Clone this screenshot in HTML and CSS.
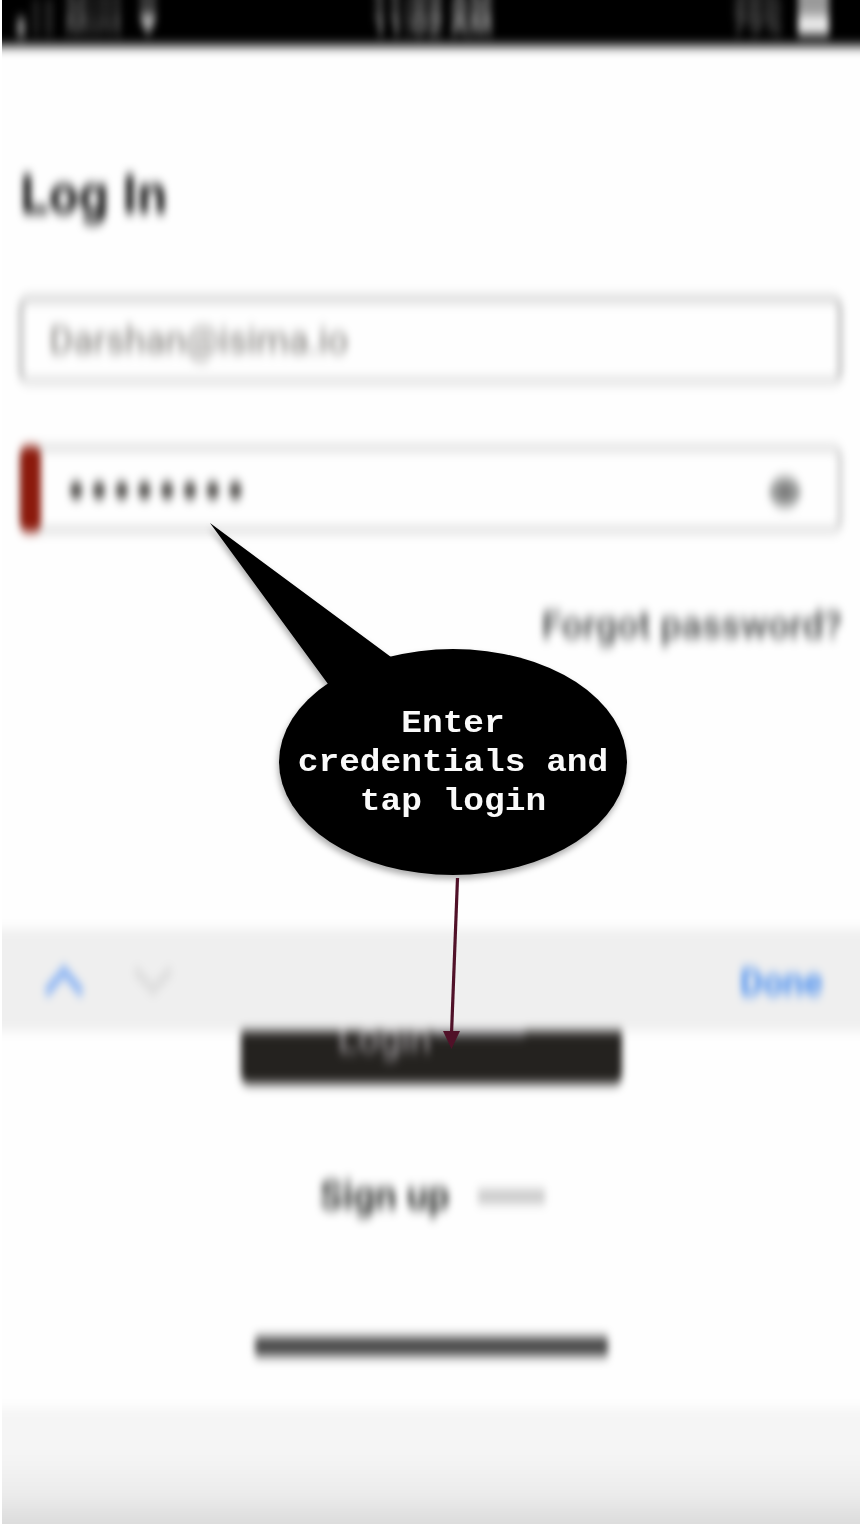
FILE: index.html
```html
<!DOCTYPE html>
<html lang="en">
<head>
<meta charset="utf-8">
<title>Log In</title>
<link rel="stylesheet" href="styles.css">
</head>
<body>
<svg class="defs" aria-hidden="true">
  <filter id="soften" x="0" y="0" width="1" height="1" color-interpolation-filters="sRGB">
    <feGaussianBlur stdDeviation="3.7 6"/>
  </filter>
</svg>
<main class="page">
  <div class="frame">
    <div class="screen">
      <header class="status">
        <div class="status-left">
          <svg class="signal" viewBox="0 0 44 40"><rect x="1" y="19" width="8" height="19" fill="#858585"/><rect x="16" y="0" width="8" height="37" fill="#1c1c1c"/><rect x="29" y="0" width="8" height="37" fill="#222"/></svg>
          <span class="status-text carrier">Mint</span>
          <svg class="wifi" viewBox="0 0 28 60"><path d="M4 0h20v40l-10 14L4 40z" fill="#383838"/><path d="M4 34q10-8 20 0L14 55z" fill="#b5b5b5"/></svg>
        </div>
        <span class="status-text time">11:02 AM</span>
        <div class="status-right">
          <span class="status-text percent">79%</span>
          <span class="battery"></span>
        </div>
      </header>
      <section class="form">
        <h1 class="title">Log In</h1>
        <div class="field email">Darshan@isima.io</div>
        <div class="field password">
          <span class="marker"></span>
          <span class="dots">••••••••</span>
          <svg class="eye" viewBox="0 0 40 40"><path d="M2 20Q6 3 20 3T38 20Q34 37 20 37T2 20Z" fill="#9c9e9d"/><circle cx="20" cy="20" r="8" fill="#777"/></svg>
        </div>
        <div class="forgot">Forgot password?</div>
      </section>
      <nav class="toolbar">
        <svg class="chevron up" viewBox="0 0 44 32"><path d="M4 28L22 6l18 22"/></svg>
        <svg class="chevron down" viewBox="0 0 44 32"><path d="M4 5l18 20L40 5"/></svg>
        <span class="done">Done</span>
      </nav>
      <section class="actions">
        <div class="login"><span class="login-text">Login</span><span class="login-line"></span></div>
        <div class="signup"><span>Sign up</span><span class="dash"></span></div>
        <div class="home"></div>
      </section>
      <footer class="bottom"></footer>
    </div>
  </div>
  <div class="callout">
    <svg class="shape" viewBox="0 0 862 1524">
      <g class="bubble"><path d="M210 523L391 657L400 720L350 720L328 684Z"/><ellipse cx="453" cy="762" rx="174" ry="113"/></g>
      <path class="line" d="M457.500 878L451.500 1034"/><path class="head" d="M443 1031h17l-8.500 18z"/>
    </svg>
    <p class="hint">Enter<br>credentials and<br>tap login</p>
  </div>
</main>
</body>
</html>
```
FILE: styles.css
```css
* { box-sizing: border-box; }
body { margin: 0; background: #fff; font-family: Roboto, "Liberation Sans", sans-serif; }
.defs { position: absolute; width: 0; height: 0; }
.page { position: relative; width: 862px; height: 1524px; overflow: hidden; }
.frame { margin: 0 2px; height: 1524px; overflow: hidden; }

/* The screen bleeds 20px past the frame so the blur stays solid at its edges. */
.screen { margin: -20px; height: 1564px; display: flex; flex-direction: column; background: #fefefe; filter: url(#soften); }

.status { flex: none; height: 66px; padding: 0 20px; background: #000; display: grid; grid-template-columns: 370px 1fr 130px; align-items: end; }
.status-left { display: flex; align-items: flex-end; padding: 0 0 8px 14px; }
.signal { width: 44px; height: 40px; }
.wifi { width: 28px; height: 50px; margin-left: 11px; }
/* Upward shadows draw the vertical streaks above each label. */
.status-text { display: inline-block; font-size: 27px; line-height: 28px; white-space: nowrap; text-shadow: 0 -8px 0 #3c3c3c, 0 -16px 0 #3c3c3c, 0 -22px 0 #3c3c3c, 0 -30px 0 #3c3c3c; }
.carrier { margin: 0 0 -1px 5px; color: #6c6c6c; letter-spacing: 1px; }
.time { justify-self: start; margin-bottom: 7px; color: #969696; letter-spacing: .6px; font-weight: 500; text-shadow: 0 -8px 0 #555, 0 -16px 0 #555, 0 -22px 0 #555, 0 -30px 0 #555; }
.status-right { display: flex; align-items: flex-end; padding-bottom: 7px; }
.percent { color: #606060; width: 66px; padding-left: 2px; }
.battery { width: 31px; height: 55px; margin: 0 0 5px 2px; background: linear-gradient(#9a9a9a 34px, #eee 38px); }

.form { flex: none; height: 883px; padding: 0 38px 0 37px; }
.title { margin: 119px 0 0 1px; font-size: 53px; line-height: 60px; font-weight: 700; color: #1b1b1b; }
.field { border: 4px solid #b0b0b0; border-radius: 10px; height: 86px; display: flex; align-items: center; }
.email { margin-top: 72px; padding-left: 26px; font-size: 37px; color: #7a7773; border-bottom-color: #c4c4c4; }
.password { margin-top: 63px; border-color: #c4c4c4; }
.marker { width: 21px; height: 86px; margin-left: -3px; border-radius: 8px; background: #8b1a0c; }
.dots { margin-left: 27px; font-family: "Liberation Sans", sans-serif; font-size: 47px; line-height: 60px; letter-spacing: 6.3px; color: #4c4a47; transform: scaleY(1.35); }
.eye { width: 38px; height: 36px; margin: 6px 34px 0 auto; }
.forgot { margin-top: 71px; text-align: right; font-size: 37.6px; line-height: 44px; font-weight: 500; color: #484a4a; }

.toolbar { flex: none; height: 102px; padding: 0 57px 0 60px; background: #efefef; display: flex; align-items: center; }
.chevron { width: 44px; height: 32px; margin-top: 2px; fill: none; stroke-width: 6.5; }
.up { stroke: #75a7f5; }
.down { stroke: #d8d8d8; margin-left: 45px; }
.done { margin-left: auto; margin-top: 6px; font-size: 36px; line-height: 42px; font-weight: 600; color: #3f88ef; }

.actions { flex: none; height: 377px; display: flex; flex-direction: column; align-items: center; }
.login { width: 381px; height: 53px; border-radius: 0 0 8px 8px; background: #24221f; overflow: hidden; display: flex; align-items: flex-start; padding-left: 97px; color: #aaa6aa; }
.login-text { font-size: 38px; line-height: 42px; margin-top: -13px; width: 95px; }
.login-line { width: 92px; height: 5px; background: #77757a; }
.signup { display: flex; align-items: center; gap: 28px; margin: 90px 0 0 2px; font-size: 38.5px; line-height: 44px; font-weight: 700; color: #383a38; }
.dash { width: 67px; height: 13px; background: #c4c4c4; }
.home { width: 353px; height: 19px; margin-top: 119px; border-radius: 3px; background: #464646; }
.bottom { flex: 1; background: linear-gradient(#f5f5f5 0, #f5f5f5 46px, #ebebeb 88px, #dcdcdc 114px); }

/* Annotation drawn over the login screen. */
.callout { position: absolute; inset: 0; }
.shape { display: block; width: 862px; height: 1524px; }
.bubble { filter: drop-shadow(-1px 4px 3px rgba(0, 0, 0, .32)); }
.line { stroke: #501128; stroke-width: 3.2; }
.head { fill: #501128; }
.hint { position: absolute; left: 279px; top: 704px; width: 348px; margin: 0; text-align: center; font: bold 34.5px/43px "Courier New", "Liberation Mono", monospace; color: #fafafa; transform: scaleY(.907); transform-origin: top; }
```
